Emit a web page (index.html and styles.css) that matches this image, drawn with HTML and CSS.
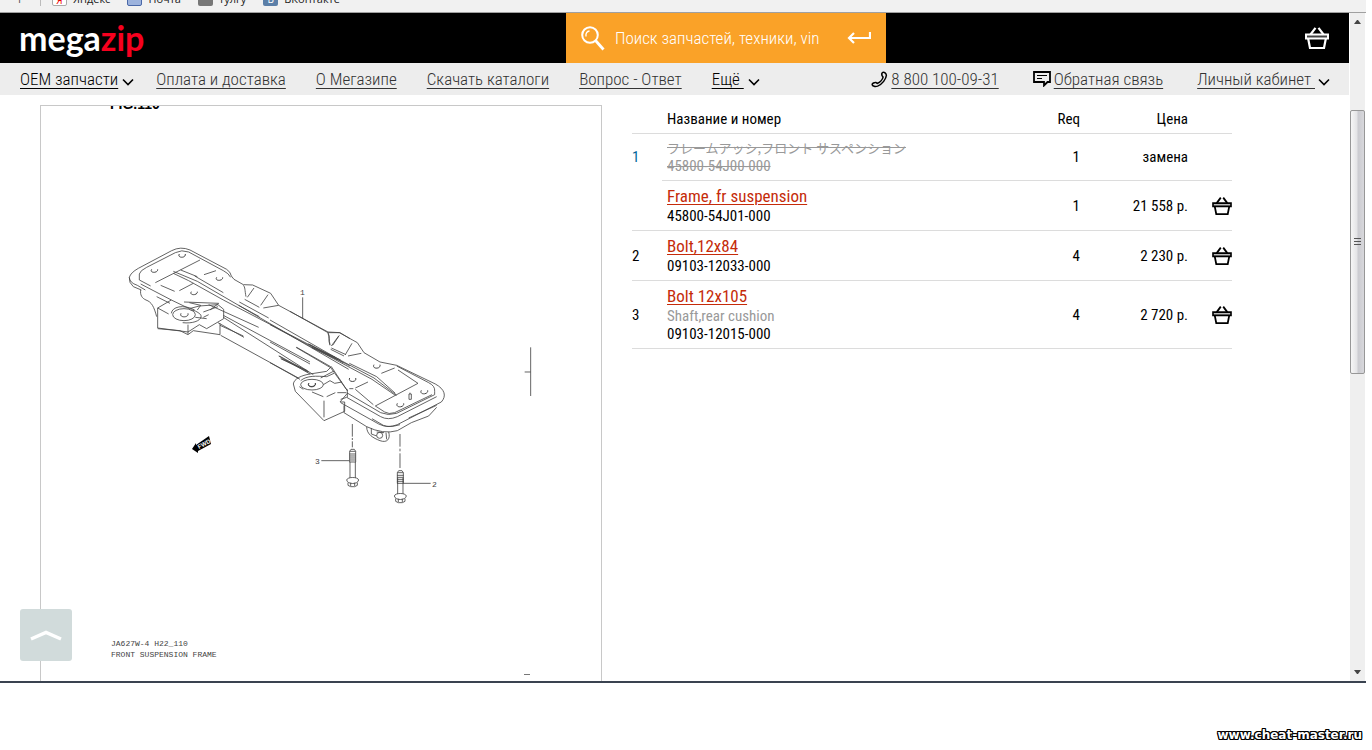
FILE: index.html
```html
<!DOCTYPE html>
<html lang="ru">
<head>
<meta charset="utf-8">
<title>megazip</title>
<link rel="stylesheet" href="styles.css">
</head>
<body>
<svg class="sprite" aria-hidden="true">
  <symbol id="chevron" viewBox="0 0 12 8"><path d="M1 1.500 6 6.500 11 1.500" fill="none" stroke="currentColor" stroke-width="1.600"/></symbol>
  <symbol id="basket" viewBox="0 0 24 22"><path d="M1 7.500H23V11.500H1Z" fill="var(--band)" stroke="currentColor" stroke-width="2"/><path d="M3.200 11.800 5 21H19L20.800 11.800M5.500 7.500 10.500 .8M18.500 7.500 13.500 .8" fill="none" stroke="currentColor" stroke-width="2.200"/></symbol>
</svg>
<nav class="bookmarks" aria-label="Закладки">
  <span class="bm-mark">Г</span>
  <span class="bm-sep"></span>
  <a class="bm" href="#"><span class="fav fav-ya">Я</span>Яндекс</a>
  <a class="bm" href="#"><span class="fav fav-mail"></span>Почта</a>
  <a class="bm" href="#"><span class="fav fav-doc"></span>тулгу</a>
  <a class="bm" href="#"><span class="fav fav-vk">В</span>ВКонтакте</a>
</nav>
<div class="viewport">
  <div class="page">
    <header class="header">
      <a class="logo" href="#">mega<span>zip</span></a>
      <form class="search">
        <svg class="search-icon" viewBox="0 0 24 25"><circle cx="9" cy="9" r="7.800" fill="none" stroke="#fff" stroke-width="2"/><path d="M14.500 14.500 22.500 23.500" stroke="#fff" stroke-width="2.800"/><path d="M5 10.500C4.500 7.500 6 5.200 8.500 5" fill="none" stroke="#fff" stroke-width="1.400"/></svg>
        <input type="search" aria-label="Поиск" placeholder="Поиск запчастей, техники, vin">
        <button type="submit" aria-label="Найти"><svg viewBox="0 0 24 12"><path d="M23 0V6H2M7 1 2 6 7 11" fill="none" stroke="#fff" stroke-width="2.200"/></svg></button>
      </form>
      <a class="cart" href="#" aria-label="Корзина"><svg><use href="#basket"/></svg></a>
    </header>
    <nav class="menu" aria-label="Меню">
      <div class="menu-group">
        <a class="strong first" href="#"><span>OEM запчасти</span><svg class="chev"><use href="#chevron"/></svg></a>
        <a href="#"><span>Оплата и доставка</span></a>
        <a href="#"><span>О Мегазипе</span></a>
        <a href="#"><span>Скачать каталоги</span></a>
        <a href="#"><span>Вопрос - Ответ</span></a>
        <a class="strong" href="#"><span>Ещё&nbsp;</span><svg class="chev"><use href="#chevron"/></svg></a>
      </div>
      <div class="menu-group menu-right">
        <a href="tel:88001000931"><svg class="ico-phone" viewBox="0 0 18 18"><path d="M12.500 1.500C14 .8 16 2.500 16.300 4.500 16 8.500 12 14 7 16 4.500 16.800 1.500 16.300 1.200 14.500 1.200 13 3.500 12 5.200 12.200L6.500 13.200C9.500 12 12 9.500 12.800 6.500L11.700 5C11.300 3.800 11.500 2 12.500 1.500Z" fill="none" stroke="currentColor" stroke-width="1.600"/></svg><span>8 800 100-09-31</span></a>
        <a href="#"><svg class="ico-chat" viewBox="0 0 18 16"><path d="M1 1H17V11H14.500L11 14.500V11H1Z" fill="none" stroke="currentColor" stroke-width="1.800"/><path d="M4 4.500H14M4 7.500H9" stroke="currentColor" stroke-width="1"/></svg><span>Обратная связь</span></a>
        <a href="#"><span>Личный кабинет&nbsp;</span><svg class="chev"><use href="#chevron"/></svg></a>
      </div>
    </nav>
    <main class="content">
      <figure class="diagram">
        <svg viewBox="41 106 560 575" role="img" aria-label="Front suspension frame">
          <text class="fig-title" x="110" y="109">FIG.110</text>
          <g class="ink" transform="translate(110 230) scale(.33333)">
            <path d="M94 180 70 170Q56 158 58 142 62 128 85 115L185 62Q212 48 240 60L350 118Q362 126 364 138L372 148 400 164 428 165 482 190 506 226 654 306 690 308 720 326"/>
            <path d="M88 150V132Q90 122 110 112L196 68Q215 58 236 66L340 122Q356 130 362 142"/>
            <path d="M88 150 122 168M58 142Q58 158 82 166L106 180M92 162 184 210M140 200 180 220"/>
            <path d="M92 180C90 195 96 205 108 210 125 216 132 230 140 260M136 158 270 90M190 130 236 152 340 210 720 408M190 124 262 154 716 418M212 120 262 140M254 138 340 188M282 134 318 122M152 166 194 184M208 182 250 160"/>
            <path d="M400 166C406 172 404 180 408 200M432 174 412 202M474 194 452 226M404 208 448 232M460 234 506 226M654 308C660 318 656 330 660 344M688 316 668 346M664 354 708 374"/>
            <path d="M578 202V266"/>
            <path d="M388 216 476 264M386 226 448 260M595 342 700 398M604 352 684 390M296 224 446 292M340 256 600 396M560 352 662 410M340 262 610 434M324 278 402 322M330 286 400 318M332 316 565 444M506 378 600 432M512 386 594 426"/>
            <path d="M143 234 184 210 238 236 268 228 324 224 341 238V266L290 296 268 284 234 306 143 294V234L176 252M143 296 210 302 234 314 250 302 330 314V280M222 216 326 220 300 240M238 218 272 226 262 240M234 284V312"/>
            <ellipse cx="222" cy="254" rx="34" ry="18"/><path d="M184 250C186 230 220 222 254 240M218 278C250 282 280 270 272 254 262 244 250 240 242 240M280 246 324 230M280 262 296 254M256 262 290 266"/>
            <path d="M550 462C552 446 575 436 600 432L650 424 664 410 712 482M550 462 556 484 642 572 704 544V516L690 516 712 490M572 452C590 436 620 438 650 440L672 430M568 470 580 478M642 512V562M606 486 640 500M650 500 676 488M682 488H708M632 444 670 424"/>
            <ellipse cx="606" cy="464" rx="34" ry="16"/><path d="M640 464 660 452 674 460 696 456"/>
            <g class="hole"><path d="M208 72C200 84 228 86 226 72M125 118C117 130 145 130 143 118M320 142C312 154 340 154 338 142M244 185C236 197 264 197 262 185M213 250C206 264 238 264 234 250M596 460C590 474 620 474 616 460"/></g>
          </g>
          <g class="ink" transform="translate(270 310) scale(.33333)">
            <path d="M60 4 174 68 208 68 262 98 282 128 330 156 380 166 496 222C525 238 530 258 514 276L382 344Q354 356 326 342L212 278M212 268 230 262 332 320Q354 332 382 320L500 260"/>
            <path d="M174 70C180 82 174 90 180 106M206 78 184 108M246 100 226 134M182 118 222 138M234 138 274 130"/>
            <path d="M380 168 476 218Q496 228 494 244V254L380 310Q354 318 332 308L230 248M316 288 444 220 384 180M316 288 344 306Q356 314 374 308L486 254"/>
            <path d="M0 30 210 150 312 204 380 256M0 44 306 208 376 256M116 102 212 150M126 112 196 142M78 112 180 172M0 96 120 162M28 138 116 186M34 146 112 182M0 158 90 208M238 160 320 200 376 250M334 190 374 174"/>
            <path d="M232 238V262M180 170 232 242M222 286V308L290 350Q340 374 382 362L424 338 476 318 500 292M306 326 340 346Q356 354 390 344M416 324 500 286M238 236H250M256 238 310 284M256 234 294 216"/>
            <path d="M290 350C290 374 310 384 330 392 352 400 362 386 356 366M304 354V372L320 378M320 366 342 368M348 368 350 388"/><circle cx="329" cy="376" r="9"/>
            <path d="M247 342V380M247 384V390M247 394V412M390 372V410M390 416V424M390 430V474"/>
            <path d="M154 452H238M400 520H482M782 112V258M764 186H782"/>
            <g id="thread"><path d="M239 424 243 418H253L257 424V456M239 424V456M239 424H257M238 432H258M238 438H258M238 444H258M238 450H258M238 456H258"/></g>
            <g id="head"><path d="M240 456V504M256 456V504M230 510C232 500 264 500 266 510 264 524 232 524 230 510ZM234 518V526L242 530H254L262 526V518M242 518V528M254 518V528"/></g>
            <use href="#thread" x="143" y="64"/>
            <use href="#head" x="143" y="48"/>
            <path d="M417 252H424V268H417ZM420 248V252"/>
            <g class="hole"><path d="M312 164C304 178 334 178 330 164M239 204C232 218 262 218 257 204M454 241C446 255 476 255 473 241M382 280C374 294 404 294 401 280M117 219C108 233 140 233 136 219"/></g>
          </g>
          <path d="M192 449 196 443V445L209 436 211 444 198 451V453Z"/><text class="fwd" transform="translate(199 449) rotate(-28)">FWD</text>
          <text class="callout" x="300" y="295">1</text>
          <text class="callout" x="315" y="464">3</text>
          <text class="callout" x="432" y="487">2</text>
          <text class="stamp" x="111" y="646">JA627W-4 H22_110</text>
          <text class="stamp" x="111" y="657">FRONT SUSPENSION FRAME</text>
          <path d="M524 674.500H530" stroke="#777"/>
        </svg>
      </figure>
      <table class="parts">
        <thead><tr><th class="num"></th><th>Название и номер</th><th class="req">Req</th><th class="price">Цена</th><th class="buy"></th></tr></thead>
        <tbody>
          <tr class="replaced"><td class="num current">1</td><td><s class="jp">フレームアッシ,フロント サスペンション</s><s>45800-54J00-000</s></td><td class="req">1</td><td class="price">замена</td><td class="buy"></td></tr>
          <tr><td class="num"></td><td><a href="#">Frame, fr suspension</a><span>45800-54J01-000</span></td><td class="req">1</td><td class="price">21 558 р.</td><td class="buy"><button type="button" aria-label="В корзину"><svg><use href="#basket"/></svg></button></td></tr>
          <tr><td class="num">2</td><td><a href="#">Bolt,12x84</a><span>09103-12033-000</span></td><td class="req">4</td><td class="price">2 230 р.</td><td class="buy"><button type="button" aria-label="В корзину"><svg><use href="#basket"/></svg></button></td></tr>
          <tr><td class="num">3</td><td><a href="#">Bolt 12x105</a><span class="muted">Shaft,rear cushion</span><span>09103-12015-000</span></td><td class="req">4</td><td class="price">2 720 р.</td><td class="buy"><button type="button" aria-label="В корзину"><svg><use href="#basket"/></svg></button></td></tr>
        </tbody>
      </table>
    </main>
    <button class="to-top" type="button" aria-label="Наверх"><svg viewBox="0 0 32 11"><path d="M1 9 16 2.500 31 9" fill="none" stroke="#fff" stroke-width="3.500"/></svg></button>
  </div>
  <div class="scrollbar" aria-hidden="true">
    <span class="arrow up"></span>
    <span class="track-before"></span>
    <span class="thumb"><i></i><i></i><i></i></span>
    <span class="track-after"></span>
    <span class="arrow down"></span>
  </div>
</div>
<footer class="watermark">www.cheat-master.ru</footer>
</body>
</html>
```
FILE: styles.css
```css
* { box-sizing: border-box; }
body {
  margin: 0;
  padding-right: 6px;
  height: 100vh;
  display: flex;
  flex-direction: column;
  background: #fff;
  color: #000;
  font: 15px/18px "Roboto Condensed", "Liberation Sans Narrow", "Arial Narrow", Roboto, sans-serif;
}
a { color: inherit; }
button { border: 0; padding: 0; background: none; color: inherit; cursor: pointer; }
.sprite { position: absolute; width: 0; height: 0; }

.bookmarks {
  flex: none;
  height: 13px;
  display: flex;
  align-items: flex-end;
  padding: 0 18px 6px;
  overflow: hidden;
  background: #f1f1f1;
  border-bottom: 1px solid #a0a0a0;
  color: #222;
  font: 11px/14px "Open Sans", "Noto Sans", sans-serif;
}
.bm-mark { width: 22px; color: #555; }
.bm-sep { width: 1px; height: 14px; margin-right: 11px; background: #bbb; }
.bm { display: flex; align-items: flex-end; gap: 6px; margin-right: 17px; text-decoration: none; }
.fav { width: 15px; height: 14px; border-radius: 2px; font-size: 10px; text-align: center; }
.fav-ya { border: 1px solid #aaa; background: #fff; color: #e00; }
.fav-mail { border: 1px solid #4a68a8; background: #9db3dd; }
.fav-doc { background: #777; }
.fav-vk { background: #5b7fa8; color: #fff; }

.viewport {
  flex: 1;
  min-height: 0;
  display: flex;
  overflow: hidden;
  border-bottom: 2px solid #3a4350;
}
.page { position: relative; flex: 1; min-width: 0; overflow: hidden; }

.header {
  display: grid;
  grid-template-columns: minmax(0, 11fr) 320px minmax(0, 9fr);
  align-items: center;
  height: 50px;
  background: #000;
  color: #fff;
}
.logo { padding-left: 19px; font: 700 34px/40px Lato, sans-serif; text-decoration: none; }
.logo span { color: #f6001e; }
.search { display: flex; align-items: center; height: 50px; padding: 0 15px; background: #faa228; }
.search-icon { flex: none; width: 24px; height: 25px; }
.search input {
  flex: 1;
  min-width: 0;
  margin: 0 10px;
  padding: 0;
  border: 0;
  outline: 0;
  background: none;
  color: #fff;
  font: inherit;
  font-size: 17px;
  font-weight: 300;
  line-height: 24px;
}
.search input::placeholder { color: #fff; opacity: 1; }
.search button svg { display: block; width: 24px; height: 12px; }
.cart { --band: #444; justify-self: end; margin-right: 20px; }
.cart svg { display: block; width: 24px; height: 22px; }

.menu {
  display: flex;
  justify-content: space-between;
  align-items: center;
  height: 32px;
  padding: 0 19px 0 20px;
  background: #ededed;
  color: #333;
  font-size: 17px;
  font-weight: 300;
  line-height: 24px;
  white-space: nowrap;
}
.menu-group { display: flex; gap: 30px; }
.menu-right { gap: 34px; }
.menu a { display: flex; align-items: center; gap: 4px; text-decoration: none; }
.menu .menu-right a { gap: 3px; }
.menu a span { text-decoration: underline; text-underline-offset: 3px; }
.menu .strong { color: #000; }
.menu .first { margin-right: -8px; }
.chev { width: 12px; height: 8px; margin-top: 5px; color: #000; }
.ico-phone { width: 17px; height: 17px; color: #000; }
.ico-chat { width: 18px; height: 16px; color: #000; }

.content { display: flex; align-items: flex-start; gap: 30px; padding: 10px 40px 0; }
.diagram { flex: 0 1 562px; margin: 0; border: 1px solid #c8c8c8; }
.diagram svg { display: block; width: 100%; }
.ink { fill: none; stroke: #444; stroke-width: 2.500; }
.hole { stroke-width: 3; }
.fig-title { font: bold 14px "Liberation Sans", Arial, sans-serif; }
.fwd { font: bold 6px "Liberation Sans", Arial, sans-serif; fill: #fff; }
.callout { font: 8px "Liberation Mono", monospace; fill: #444; }
.stamp { font: 8px "Liberation Mono", monospace; fill: #444; }

.parts { flex: 0 1 600px; border-collapse: separate; border-spacing: 0; table-layout: fixed; width: 600px; }
.parts th, .parts td { padding: 5px; border-bottom: 1px solid #dcdcdc; text-align: left; font-weight: 400; vertical-align: middle; }
.parts .num { width: 30px; padding: 5px 0; }
.parts .req { width: 84px; padding-right: 0; text-align: right; }
.parts .price { width: 108px; padding-right: 0; text-align: right; }
.parts .buy { width: 44px; padding: 0; text-align: right; }
.parts .current { border-bottom-color: transparent; color: #069; }
.parts td > a, .parts td > span, .parts td > s { display: block; width: fit-content; }
.parts td > a { color: #c52b0a; font-size: 17px; line-height: 21px; text-underline-offset: 2px; }
.parts s, .parts .muted { color: #999; }
.parts .jp { font: 13px/18px "Noto Sans CJK JP", sans-serif; }
.buy button { --band: #bbb; display: block; margin-left: auto; }
.buy svg { display: block; width: 20px; height: 18px; }

.to-top {
  position: absolute;
  left: 20px;
  bottom: 20px;
  width: 52px;
  height: 52px;
  display: grid;
  place-items: center;
  border-radius: 3px;
  background: #d1dbdb;
}
.to-top svg { width: 32px; height: 11px; }

.scrollbar {
  flex: none;
  width: 17px;
  display: flex;
  flex-direction: column;
  align-items: center;
  background: #efefef;
  border: solid #fff;
  border-width: 0 1px;
}
.arrow { width: 7px; height: 17px; }
.arrow::before { content: ""; display: block; border: 4px solid transparent; border-width: 4px 3px; }
.up::before { border-bottom-color: #444; margin-top: 3px; }
.down::before { border-top-color: #444; margin-top: 6px; }
.track-before { flex: 80; }
.track-after { flex: 291; }
.thumb {
  flex: 263;
  width: 15px;
  display: flex;
  flex-direction: column;
  align-items: center;
  justify-content: center;
  gap: 2px;
  border: 1px solid #979797;
  border-radius: 2px;
  background: linear-gradient(90deg, #f6f6f6, #e4e4e6 45%, #cbcbd0 55%, #d8d8dc);
}
.thumb i { width: 7px; height: 1px; background: #555; }

.watermark {
  flex: none;
  height: 67px;
  padding-top: 44px;
  padding-right: 4px;
  text-align: right;
  color: #fff;
  font: bold 12px/16px "DejaVu Sans", sans-serif;
  text-shadow: 1px 0 #000, -1px 0 #000, 0 1px #000, 0 -1px #000, 1px 1px #000, -1px -1px #000, 1px -1px #000, -1px 1px #000;
}
```
